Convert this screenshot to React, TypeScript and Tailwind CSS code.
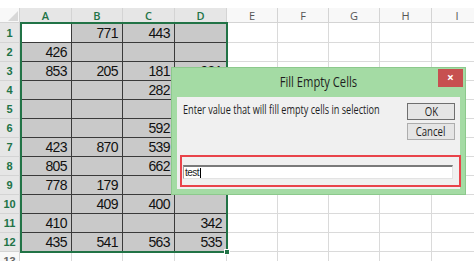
import React from 'react';

const data: string[][] = [
    ['', '771', '443', ''],
    ['426', '', '', ''],
    ['853', '205', '181', '931'],
    ['', '', '282', ''],
    ['', '', '', ''],
    ['', '', '592', ''],
    ['423', '870', '539', ''],
    ['805', '', '662', ''],
    ['778', '179', '', ''],
    ['', '409', '400', ''],
    ['410', '', '', '342'],
    ['435', '541', '563', '535'],
];

const letters = ['A', 'B', 'C', 'D', 'E', 'F', 'G', 'H', 'I'];

function SheetRow({ n, values }: { n: number; values: string[] }) {
    const selected = n <= 12;
    return (
        <>
            <div className={`flex items-end justify-center pb-[3px] border-r border-b border-[#d4d4d4] text-[11px] leading-none font-semibold ${selected ? 'bg-[#e6e6e6] text-[#217346]' : 'bg-[#f8f8f8] text-[#666]'}`}>
                {n}
            </div>
            {letters.map((l, i) => {
                const inRange = selected && i < 4;
                const v = inRange ? values[i] : '';
                const active = n === 1 && i === 0;
                return (
                    <div
                        key={l}
                        className={`flex items-end justify-end pr-[4px] pb-[2px] border-r border-b text-[14px] leading-none tracking-[-0.6px] text-[#111] ${inRange ? (active ? 'bg-white border-[#3a3a3a]' : 'bg-[#c9c9c9] border-[#3a3a3a]') : 'bg-white border-[#dadada]'}`}
                    >
                        {v}
                    </div>
                );
            })}
        </>
    );
}

export default function App() {
    return (
        <div className="w-[474px] h-[261px] overflow-hidden bg-white relative" style={{ fontFamily: '"Liberation Sans", Arial, sans-serif' }}>
            <div className="pt-2">
                <div className="grid grid-cols-[20px_52px_51px_52px_52px_51px_51px_51px_52px_51px] grid-rows-[15px_20px_repeat(12,19px)_16px]">
                    {/* corner */}
                    <div className="relative bg-[#f8f8f8] border-r border-b border-[#d4d4d4]">
                        <div className="absolute right-[1px] bottom-[1px] w-0 h-0 border-l-[10px] border-l-transparent border-b-[10px] border-b-[#d8d8d8]" />
                    </div>
                    {letters.map((l, i) => (
                        <div
                            key={l}
                            className={`flex items-center justify-center border-r border-b border-[#d4d4d4] text-[11px] leading-none ${i < 4 ? 'bg-[#e6e6e6] text-[#217346] font-semibold' : 'bg-[#f8f8f8] text-[#555]'}`}
                            style={{ fontFamily: '"Open Sans", sans-serif' }}
                        >
                            {l}
                        </div>
                    ))}
                    {data.map((r, i) => (
                        <SheetRow key={i} n={i + 1} values={r} />
                    ))}
                    <SheetRow n={13} values={['', '', '', '']} />
                </div>
            </div>

            {/* selection outline + fill handle */}
            <div className="absolute left-[20px] top-[22px] w-[208px] h-[231px] border-2 border-[#217346]" />
            <div className="absolute left-[224px] top-[249px] w-[6px] h-[6px] bg-[#217346] border border-white" />

            {/* Fill Empty Cells dialog */}
            <div className="absolute left-[171px] top-[67px] w-[295px] h-[128px] flex flex-col bg-[#a4dba4] border border-[#8cc98c]" style={{ fontFamily: '"Open Sans", sans-serif' }}>
                <div className="relative h-[29px] flex items-center justify-center pb-[3px] text-[14px] text-[#1e1e1e]">
                    <span className="inline-block scale-x-[0.8]">Fill Empty Cells</span>
                    <button className="absolute right-[2px] top-[1px] w-[25px] h-[18px] bg-[#c75050] flex items-center justify-center text-white text-[12px] font-bold leading-none">
                        ×
                    </button>
                </div>
                <div className="relative flex-1 mx-[5px] mb-[5px] bg-[#f0f0f0] px-[6px] pt-[6px]">
                    <div className="flex">
                        <div className="flex-1 min-w-0 flex text-[12px] leading-none text-[#1e1e1e] pt-[1px]">
                            <span className="origin-left scale-x-[0.76] whitespace-nowrap">
                                Enter value that will fill empty cells in selection
                            </span>
                        </div>
                        <div className="shrink-0 flex flex-col gap-[3px] w-[48px] mr-[-1px]">
                            <button className="h-[17px] bg-[#e5e5e5] border border-[#6f6f6f] text-[12px] leading-none text-[#1e1e1e]">
                                <span className="inline-block scale-x-[0.8]">OK</span>
                            </button>
                            <button className="h-[17px] bg-[#e5e5e5] border border-[#adadad] text-[12px] leading-none text-[#1e1e1e]">
                                <span className="inline-block scale-x-[0.8]">Cancel</span>
                            </button>
                        </div>
                    </div>
                    <div className="mt-[25px] w-[270px] h-[14px] bg-white border-t-2 border-t-[#7a7a7a] border-l border-l-[#a0a0a0] border-r border-r-[#e3e3e3] border-b border-b-[#e3e3e3] flex items-center pl-[1px]">
                        <span className="text-[10px] leading-none tracking-[-0.5px] text-[#222]" style={{ fontFamily: '"Liberation Sans", Arial, sans-serif' }}>test</span>
                        <span className="ml-[1px] w-px h-[10px] bg-black" />
                    </div>
                    {/* annotation box */}
                    <div className="absolute left-[3px] top-[58px] w-[281px] h-[32px] border-2 border-[#e9434a]" />
                </div>
            </div>
        </div>
    );
}
